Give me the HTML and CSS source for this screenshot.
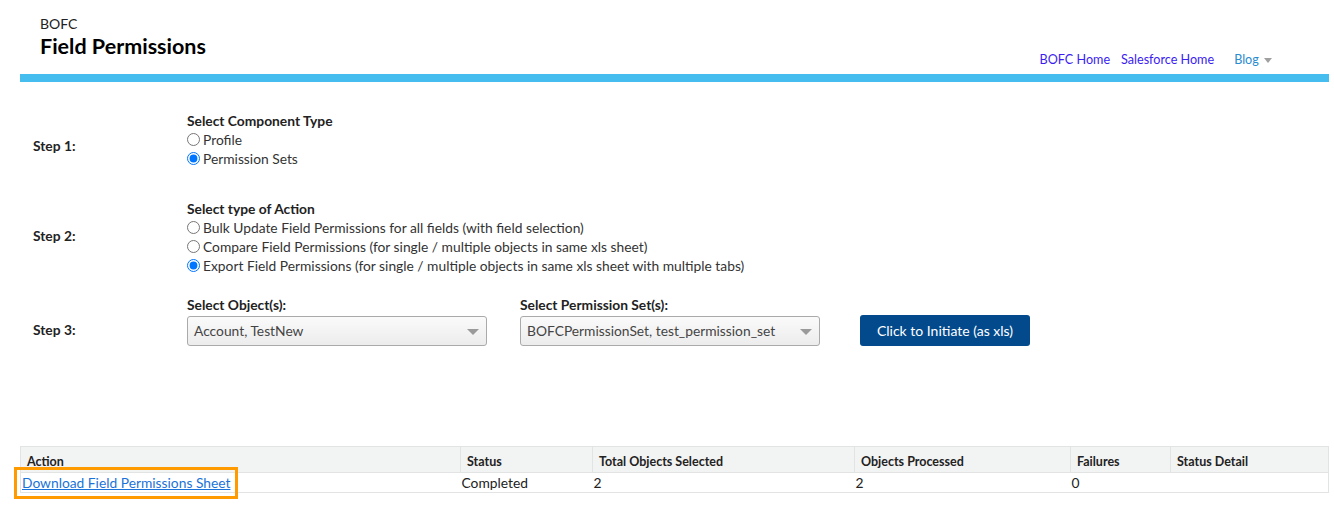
FILE: index.html
```html
<!DOCTYPE html>
<html lang="en">
<head>
  <meta charset="UTF-8">
  <meta name="viewport" content="width=device-width, initial-scale=1.0">
  <title>Field Permissions</title>
  <link rel="stylesheet" href="styles.css">
</head>
<body>
  <header class="page-header">
    <div class="title-block">
      <div class="app-name">BOFC</div>
      <h1>Field Permissions</h1>
    </div>
    <nav class="top-nav">
      <a href="#">BOFC Home</a>
      <a href="#">Salesforce Home</a>
      <a href="#" class="blog-link">Blog <span class="caret"></span></a>
    </nav>
  </header>
  <div class="accent-bar"></div>

  <div class="steps">
    <div class="step step-1">
      <div class="step-label">Step 1:</div>
      <div class="step-body">
        <div class="group-title">Select Component Type</div>
        <label class="radio"><input type="radio" name="comp"> Profile</label>
        <label class="radio"><input type="radio" name="comp" checked> Permission Sets</label>
      </div>
    </div>

    <div class="step step-2">
      <div class="step-label">Step 2:</div>
      <div class="step-body">
        <div class="group-title">Select type of Action</div>
        <label class="radio"><input type="radio" name="action"> Bulk Update Field Permissions for all fields (with field selection)</label>
        <label class="radio"><input type="radio" name="action"> Compare Field Permissions (for single / multiple objects in same xls sheet)</label>
        <label class="radio"><input type="radio" name="action" checked> Export Field Permissions (for single / multiple objects in same xls sheet with multiple tabs)</label>
      </div>
    </div>

    <div class="step step-3">
      <div class="step-label">Step 3:</div>
      <div class="step-body step-row">
        <div class="field">
          <div class="group-title">Select Object(s):</div>
          <div class="picklist">Account, TestNew <span class="arrow"></span></div>
        </div>
        <div class="field">
          <div class="group-title">Select Permission Set(s):</div>
          <div class="picklist">BOFCPermissionSet, test_permission_set <span class="arrow"></span></div>
        </div>
        <button class="primary-btn">Click to Initiate (as xls)</button>
      </div>
    </div>
  </div>

  <table class="results">
    <thead>
      <tr>
        <th class="col-action">Action</th>
        <th class="col-status">Status</th>
        <th class="col-total">Total Objects Selected</th>
        <th class="col-processed">Objects Processed</th>
        <th class="col-failures">Failures</th>
        <th>Status Detail</th>
      </tr>
    </thead>
    <tbody>
      <tr>
        <td><a href="#" class="download">Download Field Permissions Sheet</a></td>
        <td>Completed</td>
        <td>2</td>
        <td>2</td>
        <td>0</td>
        <td></td>
      </tr>
    </tbody>
  </table>
</body>
</html>
```

FILE: styles.css
```css
* {
  box-sizing: border-box;
  margin: 0;
  padding: 0;
}

html,
body {
  min-height: 100%;
  height: 100%;
}

body {
  font-family: Lato, "Open Sans", Arial, sans-serif;
  font-size: 13.8px;
  color: #222;
  background: #fff;
  padding: 0 5px 0 20px;
}

/* Kopfbereich */
.page-header {
  display: flex;
  justify-content: space-between;
  align-items: flex-end;
  height: 74px;
}
.title-block {
  padding: 15px 0 0 20px;
  align-self: flex-start;
}
.app-name {
  font-size: 14px;
  line-height: 18px;
}
h1 {
  font-size: 21.5px;
  font-weight: 700;
  line-height: 26px;
  color: #000;
}
.top-nav {
  display: flex;
  align-items: center;
  padding: 0 57px 7px 0;
  font-size: 12.6px;
}
.top-nav a {
  color: #3b1cf2;
  text-decoration: none;
  margin-left: 11px;
}
.top-nav .blog-link {
  color: #2a8bd0;
  margin-left: 20px;
}
.caret {
  display: inline-block;
  width: 0;
  height: 0;
  border-left: 4px solid transparent;
  border-right: 4px solid transparent;
  border-top: 5px solid #a0a0a0;
  margin-left: 2px;
  vertical-align: middle;
}
.accent-bar {
  height: 8px;
  background: #45bdee;
}

/* Schritte */
.steps {
  padding-top: 29px;
}
.step {
  display: flex;
  align-items: center;
}
.step-1 { margin-bottom: 31px; }
.step-2 { margin-bottom: 20px; }
.step-1 .step-label { margin-top: 12px; }
.step-2 .step-label { margin-top: -4px; }
.step-3 .step-label { margin-top: 17px; }
.step-label {
  width: 167px;
  padding-left: 13px;
  font-weight: 700;
}
.group-title {
  font-weight: 700;
  line-height: 19px;
}
.radio {
  display: flex;
  align-items: center;
  line-height: 19px;
  color: #333;
}
.radio input {
  width: 13px;
  height: 13px;
  margin: 0 3px 0 0;
}
.step-row {
  display: flex;
  align-items: flex-end;
}
.field {
  width: 300px;
  margin-right: 33px;
}
.picklist {
  position: relative;
  height: 30px;
  line-height: 28px;
  border: 1px solid #aaa;
  border-radius: 3px;
  background: linear-gradient(#fafafa, #ececec);
  padding-left: 6px;
  color: #444;
  margin-top: 2px;
}
.arrow {
  position: absolute;
  right: 7px;
  top: 12px;
  border-left: 6px solid transparent;
  border-right: 6px solid transparent;
  border-top: 6px solid #9a9a9a;
}
.primary-btn {
  margin-left: 7px;
  width: 170px;
  height: 31px;
  background: #034a8c;
  color: #fff;
  border: none;
  border-radius: 3px;
  font-family: inherit;
  font-size: 14px;
}

/* Ergebnistabelle */
.results {
  margin-top: 100px;
  width: 100%;
  border-collapse: collapse;
  border: 1px solid #e2e4e4;
}
.results th {
  background: #f2f3f3;
  text-align: left;
  font-weight: 700;
  font-size: 12.5px;
  padding: 0 6px 3px 6px;
  height: 26px;
  vertical-align: bottom;
  border: 1px solid #e2e4e4;
}
.results td {
  padding: 0 1px;
  height: 20px;
  border-bottom: 1px solid #e2e4e4;
}
.col-action { width: 440px; }
.col-status { width: 132px; }
.col-total { width: 262px; }
.col-processed { width: 216px; }
.col-failures { width: 100px; }
.download {
  display: inline-block;
  line-height: 16px;
  color: #1a73d9;
  outline: 3px solid #ff9a00;
  outline-offset: 5px;
}
```
